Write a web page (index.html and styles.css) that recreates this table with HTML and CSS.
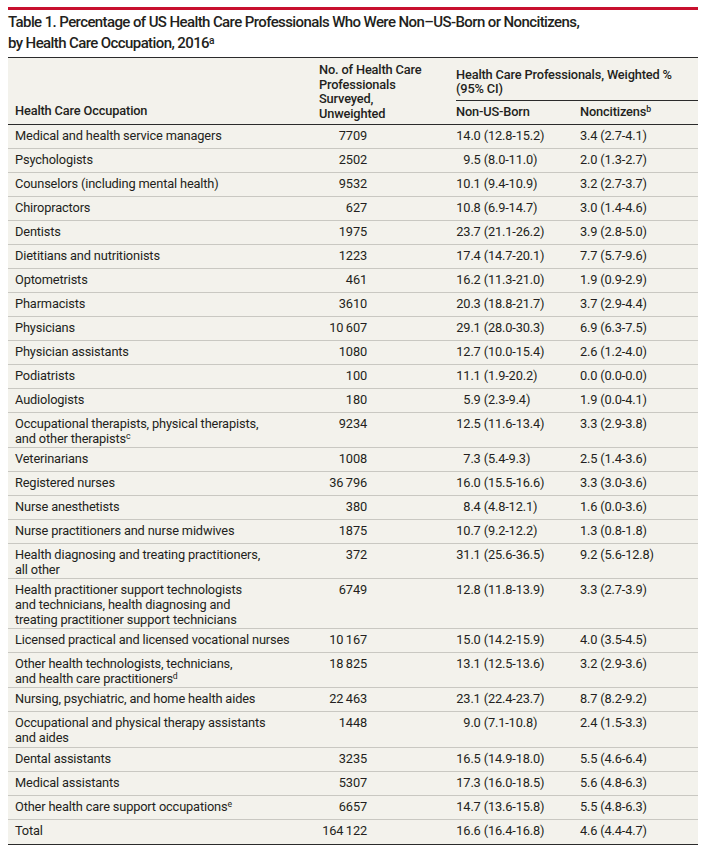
FILE: index.html
```html
<!DOCTYPE html>
<html lang="en">
<head>
<meta charset="utf-8">
<title>Table 1</title>
<link rel="stylesheet" href="styles.css">
</head>
<body>
<div class="page">
  <div class="redbar"></div>
  <h1 class="title">Table 1. Percentage of US Health Care Professionals Who Were Non–US-Born or Noncitizens,<br>by Health Care Occupation, 2016<sup>a</sup></h1>
  <div class="table">
    <div class="thead">
      <div class="h-occ">Health Care Occupation</div>
      <div class="h-count">No. of Health Care<br>Professionals<br>Surveyed,<br>Unweighted</div>
      <div class="h-group">Health Care Professionals, Weighted %<br>(95% CI)</div>
      <div class="h-nonus">Non-US-Born</div>
      <div class="h-noncit">Noncitizens<sup>b</sup></div>
    </div>
    <div class="row"><div class="occ">Medical and health service managers</div><div class="num">7709</div><div class="pct"><span class="w">14</span>.0 (12.8-15.2)</div><div class="pct2">3.4 (2.7-4.1)</div></div>
    <div class="row"><div class="occ">Psychologists</div><div class="num">2502</div><div class="pct"><span class="w">9</span>.5 (8.0-11.0)</div><div class="pct2">2.0 (1.3-2.7)</div></div>
    <div class="row"><div class="occ">Counselors (including mental health)</div><div class="num">9532</div><div class="pct"><span class="w">10</span>.1 (9.4-10.9)</div><div class="pct2">3.2 (2.7-3.7)</div></div>
    <div class="row"><div class="occ">Chiropractors</div><div class="num">627</div><div class="pct"><span class="w">10</span>.8 (6.9-14.7)</div><div class="pct2">3.0 (1.4-4.6)</div></div>
    <div class="row"><div class="occ">Dentists</div><div class="num">1975</div><div class="pct"><span class="w">23</span>.7 (21.1-26.2)</div><div class="pct2">3.9 (2.8-5.0)</div></div>
    <div class="row"><div class="occ">Dietitians and nutritionists</div><div class="num">1223</div><div class="pct"><span class="w">17</span>.4 (14.7-20.1)</div><div class="pct2">7.7 (5.7-9.6)</div></div>
    <div class="row"><div class="occ">Optometrists</div><div class="num">461</div><div class="pct"><span class="w">16</span>.2 (11.3-21.0)</div><div class="pct2">1.9 (0.9-2.9)</div></div>
    <div class="row"><div class="occ">Pharmacists</div><div class="num">3610</div><div class="pct"><span class="w">20</span>.3 (18.8-21.7)</div><div class="pct2">3.7 (2.9-4.4)</div></div>
    <div class="row"><div class="occ">Physicians</div><div class="num">10&#8201;607</div><div class="pct"><span class="w">29</span>.1 (28.0-30.3)</div><div class="pct2">6.9 (6.3-7.5)</div></div>
    <div class="row"><div class="occ">Physician assistants</div><div class="num">1080</div><div class="pct"><span class="w">12</span>.7 (10.0-15.4)</div><div class="pct2">2.6 (1.2-4.0)</div></div>
    <div class="row"><div class="occ">Podiatrists</div><div class="num">100</div><div class="pct"><span class="w">11</span>.1 (1.9-20.2)</div><div class="pct2">0.0 (0.0-0.0)</div></div>
    <div class="row"><div class="occ">Audiologists</div><div class="num">180</div><div class="pct"><span class="w">5</span>.9 (2.3-9.4)</div><div class="pct2">1.9 (0.0-4.1)</div></div>
    <div class="row"><div class="occ">Occupational therapists, physical therapists,<br>and other therapists<sup>c</sup></div><div class="num">9234</div><div class="pct"><span class="w">12</span>.5 (11.6-13.4)</div><div class="pct2">3.3 (2.9-3.8)</div></div>
    <div class="row"><div class="occ">Veterinarians</div><div class="num">1008</div><div class="pct"><span class="w">7</span>.3 (5.4-9.3)</div><div class="pct2">2.5 (1.4-3.6)</div></div>
    <div class="row"><div class="occ">Registered nurses</div><div class="num">36&#8201;796</div><div class="pct"><span class="w">16</span>.0 (15.5-16.6)</div><div class="pct2">3.3 (3.0-3.6)</div></div>
    <div class="row"><div class="occ">Nurse anesthetists</div><div class="num">380</div><div class="pct"><span class="w">8</span>.4 (4.8-12.1)</div><div class="pct2">1.6 (0.0-3.6)</div></div>
    <div class="row"><div class="occ">Nurse practitioners and nurse midwives</div><div class="num">1875</div><div class="pct"><span class="w">10</span>.7 (9.2-12.2)</div><div class="pct2">1.3 (0.8-1.8)</div></div>
    <div class="row"><div class="occ">Health diagnosing and treating practitioners,<br>all other</div><div class="num">372</div><div class="pct"><span class="w">31</span>.1 (25.6-36.5)</div><div class="pct2">9.2 (5.6-12.8)</div></div>
    <div class="row"><div class="occ">Health practitioner support technologists<br>and technicians, health diagnosing and<br>treating practitioner support technicians</div><div class="num">6749</div><div class="pct"><span class="w">12</span>.8 (11.8-13.9)</div><div class="pct2">3.3 (2.7-3.9)</div></div>
    <div class="row"><div class="occ">Licensed practical and licensed vocational nurses</div><div class="num">10&#8201;167</div><div class="pct"><span class="w">15</span>.0 (14.2-15.9)</div><div class="pct2">4.0 (3.5-4.5)</div></div>
    <div class="row"><div class="occ">Other health technologists, technicians,<br>and health care practitioners<sup>d</sup></div><div class="num">18&#8201;825</div><div class="pct"><span class="w">13</span>.1 (12.5-13.6)</div><div class="pct2">3.2 (2.9-3.6)</div></div>
    <div class="row"><div class="occ">Nursing, psychiatric, and home health aides</div><div class="num">22&#8201;463</div><div class="pct"><span class="w">23</span>.1 (22.4-23.7)</div><div class="pct2">8.7 (8.2-9.2)</div></div>
    <div class="row"><div class="occ">Occupational and physical therapy assistants<br>and aides</div><div class="num">1448</div><div class="pct"><span class="w">9</span>.0 (7.1-10.8)</div><div class="pct2">2.4 (1.5-3.3)</div></div>
    <div class="row"><div class="occ">Dental assistants</div><div class="num">3235</div><div class="pct"><span class="w">16</span>.5 (14.9-18.0)</div><div class="pct2">5.5 (4.6-6.4)</div></div>
    <div class="row"><div class="occ">Medical assistants</div><div class="num">5307</div><div class="pct"><span class="w">17</span>.3 (16.0-18.5)</div><div class="pct2">5.6 (4.8-6.3)</div></div>
    <div class="row"><div class="occ">Other health care support occupations<sup>e</sup></div><div class="num">6657</div><div class="pct"><span class="w">14</span>.7 (13.6-15.8)</div><div class="pct2">5.5 (4.8-6.3)</div></div>
    <div class="row"><div class="occ">Total</div><div class="num">164&#8201;122</div><div class="pct"><span class="w">16</span>.6 (16.4-16.8)</div><div class="pct2">4.6 (4.4-4.7)</div></div>
  </div>
</div>
</body>
</html>
```
FILE: styles.css
```css
* { box-sizing: border-box; }
html, body { margin: 0; padding: 0; background: #fff; }
body {
  font-family: Roboto, "Liberation Sans", sans-serif;
  color: #231f20;
}
.page {
  width: 708px;
  padding: 7px 10px 0 8px;
}
.redbar {
  height: 3px;
  background: #c8102e;
}
.title {
  margin: 2px 0 3px 0;
  font-size: 15px;
  line-height: 21px;
  font-weight: 500;
  letter-spacing: -0.6px;
}
sup {
  font-size: 0.68em;
  line-height: 0;
  vertical-align: 0.42em;
  letter-spacing: 0;
}
.table {
  background: #f3f2ec;
  border-top: 1px solid #2b2b2b;
  border-bottom: 1.5px solid #2b2b2b;
  font-size: 12.8px;
  letter-spacing: -0.15px;
}
.thead {
  display: grid;
  grid-template-columns: 304px 137px 124px 1fr;
  grid-template-rows: 43px 23px;
  padding-left: 7px;
  border-bottom: 1px solid #2b2b2b;
  font-weight: 500;
  line-height: 14.7px;
}
.h-occ {
  grid-column: 1;
  grid-row: 1 / 3;
  align-self: end;
  padding-bottom: 5px;
}
.h-count {
  grid-column: 2;
  grid-row: 1 / 3;
  padding-top: 5px;
}
.h-group {
  grid-column: 3 / 5;
  grid-row: 1;
  display: flex;
  align-items: flex-end;
  padding-bottom: 3px;
  border-bottom: 1px solid #2b2b2b;
}
.h-nonus, .h-noncit {
  grid-row: 2;
  align-self: center;
}
.h-nonus { grid-column: 3; }
.h-noncit { grid-column: 4; }
.row {
  display: grid;
  grid-template-columns: 290px 62px 213px 1fr;
  padding: 4px 0 1px 7px;
  min-height: 24px;
  line-height: 14.6px;
  border-bottom: 1px solid #c9c8c2;
  white-space: nowrap;
}
.row:last-child { border-bottom: none; }
.num { text-align: right; }
.pct { padding-left: 89px; }
.w {
  display: inline-block;
  width: 2ch;
  text-align: right;
}
```
